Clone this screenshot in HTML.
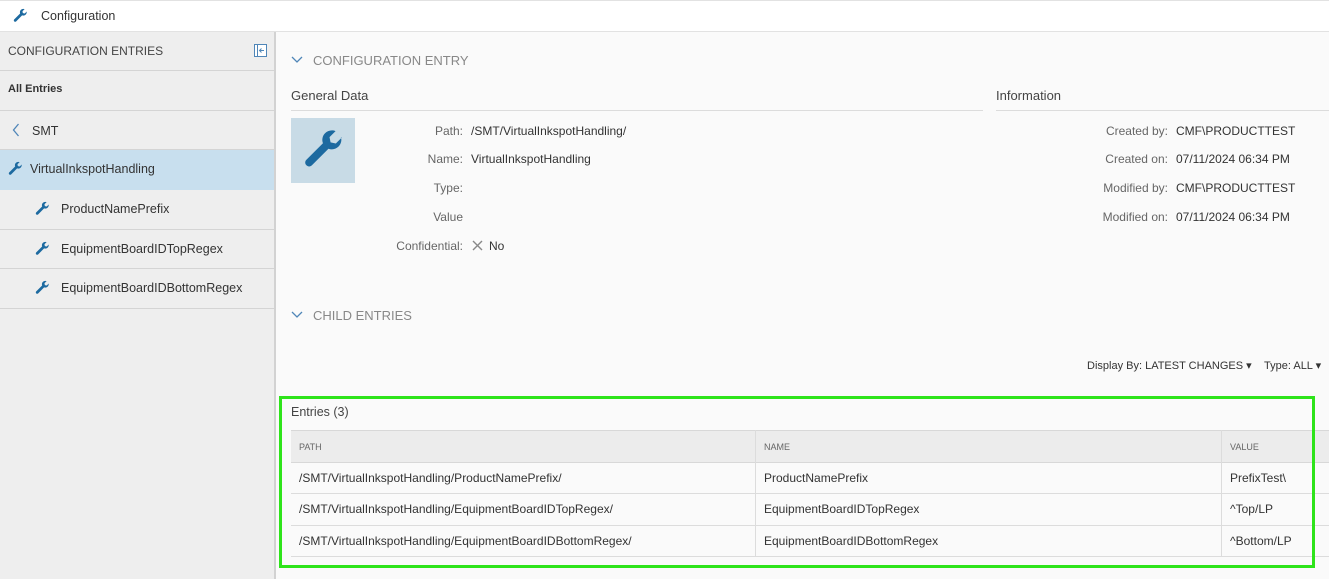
<!DOCTYPE html>
<html><head><meta charset="utf-8"><style>
*{margin:0;padding:0;box-sizing:border-box}
body{width:1329px;height:579px;overflow:hidden;background:#fafafa;font-family:"Liberation Sans",sans-serif;font-size:12px;color:#333;position:relative}
.a{position:absolute;white-space:nowrap}
.top{left:0;top:0;width:1329px;height:32px;background:#fff;border-top:1px solid #e2e2e2;border-bottom:1px solid #e2e2e2}
.side{left:0;top:32px;width:276px;height:547px;background:#eeeeee;border-right:2px solid #d2d2d2}
.row{position:absolute;left:0;width:274px;border-bottom:1px solid #d4d4d4}
.lbl{color:#666;text-align:right}
.hline{height:1px;background:#dcdcdc}
.th{color:#666;font-size:9px}
.cell{font-size:12px}
</style></head><body>
<svg width="0" height="0" style="position:absolute"><defs><symbol id="w" viewBox="0 0 16 16"><path d="M14.8 3.6l-2.3 2.3-2-.4-.4-2 2.3-2.3C11 .6 9.4 1 8.4 2 7.4 3 7.1 4.5 7.6 5.8L1.3 12.1c-.6.6-.6 1.5 0 2.1.6.6 1.5.6 2.1 0l6.3-6.3c1.3.5 2.8.2 3.8-.8 1-1 1.4-2.6.9-3.5z" fill="#1d6aa0"/></symbol></defs></svg>
<div class="a top"></div>
<svg class="a" style="left:13px;top:8px" width="15" height="15"><use href="#w"/></svg>
<div class="a" style="left:41px;top:9px;font-size:12.5px;color:#333">Configuration</div>

<div class="a side">
 <div class="row" style="top:0;height:39px"></div>
 <div class="a" style="left:8px;top:12px;font-size:12px;color:#444">CONFIGURATION ENTRIES</div>
 <svg class="a" style="left:254px;top:12px" width="13" height="13"><rect x="0.5" y="0.5" width="12" height="12" fill="#fff" stroke="#4f86b8"/><line x1="3.5" y1="1" x2="3.5" y2="12" stroke="#4f86b8"/><path d="M10 6.5H5.5M7.5 4.5L5.5 6.5 7.5 8.5" fill="none" stroke="#4f86b8"/></svg>
 <div class="row" style="top:39px;height:40px"></div>
 <div class="a" style="left:8px;top:51px;font-size:11px;font-weight:bold;color:#333">All Entries</div>
 <div class="row" style="top:79px;height:39px"></div>
 <svg class="a" style="left:12px;top:91px" width="8" height="14"><path d="M6.5 1L1.5 7l5 6" fill="none" stroke="#4f86b8" stroke-width="1.3"/></svg>
 <div class="a" style="left:32px;top:92px;font-size:12.5px">SMT</div>
 <div class="row" style="top:118px;height:40px;background:#c8dfee;border-bottom:1px solid #c8dfee"></div>
 <svg class="a" style="left:8px;top:129px" width="15" height="15"><use href="#w"/></svg>
 <div class="a" style="left:30px;top:130px;font-size:12.5px">VirtualInkspotHandling</div>
 <div class="row" style="top:158px;height:40px"></div>
 <svg class="a" style="left:35px;top:169px" width="15" height="15"><use href="#w"/></svg>
 <div class="a" style="left:61px;top:170px;font-size:12.5px">ProductNamePrefix</div>
 <div class="row" style="top:198px;height:39px"></div>
 <svg class="a" style="left:35px;top:209px" width="15" height="15"><use href="#w"/></svg>
 <div class="a" style="left:61px;top:210px;font-size:12.5px">EquipmentBoardIDTopRegex</div>
 <div class="row" style="top:237px;height:40px"></div>
 <svg class="a" style="left:35px;top:248px" width="15" height="15"><use href="#w"/></svg>
 <div class="a" style="left:61px;top:249px;font-size:12.5px">EquipmentBoardIDBottomRegex</div>
</div>

<svg class="a" style="left:291px;top:56px" width="12" height="7"><path d="M1 1l5 5 5-5" fill="none" stroke="#4f86b8" stroke-width="1.3"/></svg>
<div class="a" style="left:313px;top:53px;font-size:13px;color:#888">CONFIGURATION ENTRY</div>
<div class="a" style="left:291px;top:88px;font-size:13px;color:#444">General Data</div>
<div class="a hline" style="left:291px;top:110px;width:692px"></div>
<div class="a" style="left:996px;top:88px;font-size:13px;color:#444">Information</div>
<div class="a hline" style="left:996px;top:110px;width:333px"></div>
<div class="a" style="left:291px;top:118px;width:64px;height:65px;background:#c8dbe6"></div>
<svg class="a" style="left:303px;top:128px" width="42" height="42"><use href="#w"/></svg>

<div class="a lbl" style="left:363px;top:124px;width:100px">Path:</div><div class="a" style="left:471px;top:124px">/SMT/VirtualInkspotHandling/</div>
<div class="a lbl" style="left:363px;top:152px;width:100px">Name:</div><div class="a" style="left:471px;top:152px">VirtualInkspotHandling</div>
<div class="a lbl" style="left:363px;top:181px;width:100px">Type:</div>
<div class="a lbl" style="left:363px;top:210px;width:100px">Value</div>
<div class="a lbl" style="left:363px;top:239px;width:100px">Confidential:</div>
<svg class="a" style="left:472px;top:240px" width="11" height="11"><path d="M1 1l9 9M10 1l-9 9" stroke="#888" stroke-width="1.4"/></svg><div class="a" style="left:489px;top:239px">No</div>

<div class="a lbl" style="left:1040px;top:124px;width:128px">Created by:</div><div class="a" style="left:1176px;top:124px">CMF\PRODUCTTEST</div>
<div class="a lbl" style="left:1040px;top:152px;width:128px">Created on:</div><div class="a" style="left:1176px;top:152px">07/11/2024 06:34 PM</div>
<div class="a lbl" style="left:1040px;top:181px;width:128px">Modified by:</div><div class="a" style="left:1176px;top:181px">CMF\PRODUCTTEST</div>
<div class="a lbl" style="left:1040px;top:210px;width:128px">Modified on:</div><div class="a" style="left:1176px;top:210px">07/11/2024 06:34 PM</div>

<svg class="a" style="left:291px;top:311px" width="12" height="7"><path d="M1 1l5 5 5-5" fill="none" stroke="#4f86b8" stroke-width="1.3"/></svg>
<div class="a" style="left:313px;top:308px;font-size:13px;color:#888">CHILD ENTRIES</div>
<div class="a" style="left:1087px;top:359px;font-size:11px">Display By: LATEST CHANGES &#9662;</div>
<div class="a" style="left:1264px;top:359px;font-size:11px">Type: ALL &#9662;</div>

<div class="a" style="left:291px;top:405px;font-size:12.5px;color:#444">Entries (3)</div>
<div class="a" style="left:291px;top:430px;width:1038px;height:33px;background:#ececec;border-top:1px solid #d8d8d8;border-bottom:1px solid #d8d8d8"></div>
<div class="a" style="left:755px;top:430px;width:1px;height:127px;background:#dcdcdc"></div>
<div class="a" style="left:1221px;top:430px;width:1px;height:127px;background:#dcdcdc"></div>
<div class="a th" style="left:299px;top:442px">PATH</div>
<div class="a th" style="left:764px;top:442px">NAME</div>
<div class="a th" style="left:1230px;top:442px">VALUE</div>
<div class="a hline" style="left:291px;top:493px;width:1038px"></div>
<div class="a hline" style="left:291px;top:525px;width:1038px"></div>
<div class="a hline" style="left:291px;top:556px;width:1038px"></div>
<div class="a cell" style="left:299px;top:471px">/SMT/VirtualInkspotHandling/ProductNamePrefix/</div>
<div class="a cell" style="left:764px;top:471px">ProductNamePrefix</div>
<div class="a cell" style="left:1230px;top:471px">PrefixTest\</div>
<div class="a cell" style="left:299px;top:502px">/SMT/VirtualInkspotHandling/EquipmentBoardIDTopRegex/</div>
<div class="a cell" style="left:764px;top:502px">EquipmentBoardIDTopRegex</div>
<div class="a cell" style="left:1230px;top:502px">^Top/LP</div>
<div class="a cell" style="left:299px;top:534px">/SMT/VirtualInkspotHandling/EquipmentBoardIDBottomRegex/</div>
<div class="a cell" style="left:764px;top:534px">EquipmentBoardIDBottomRegex</div>
<div class="a cell" style="left:1230px;top:534px">^Bottom/LP</div>

<div class="a" style="left:279px;top:396px;width:1036px;height:172px;border:3px solid #2ee41a"></div>
</body></html>
